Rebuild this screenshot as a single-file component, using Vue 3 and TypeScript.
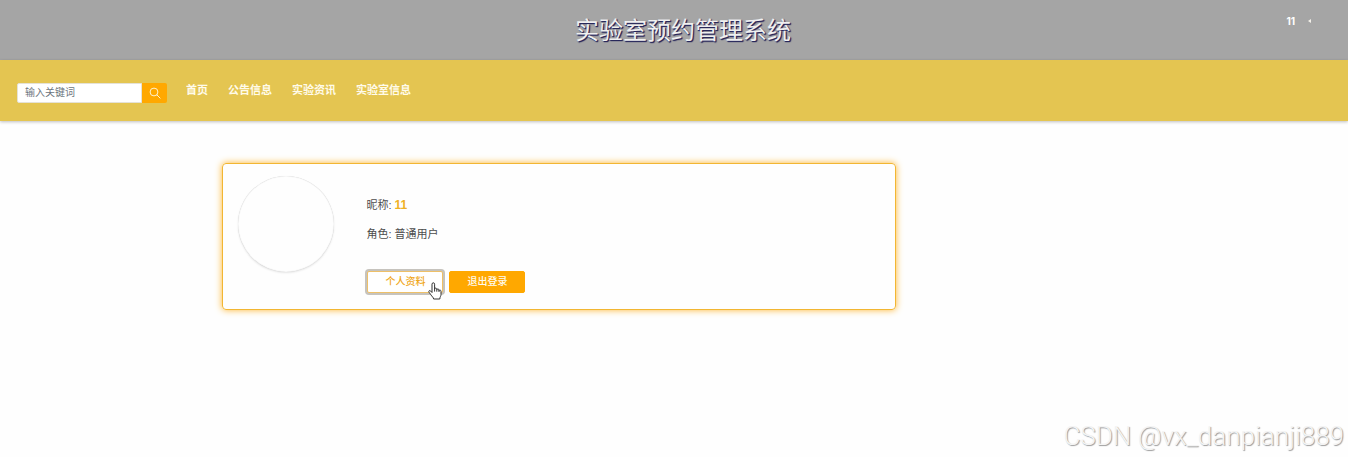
<script setup lang="ts">
import { ref } from 'vue'

interface NavLink {
  label: string
  href: string
}

const keyword = ref<string>('')
const nickname = '11'
const role = '普通用户'
const links: NavLink[] = [
  { label: '首页', href: '#home' },
  { label: '公告信息', href: '#notice' },
  { label: '实验资讯', href: '#news' },
  { label: '实验室信息', href: '#labs' },
]
</script>

<template>
  <div class="page">
    <header class="banner">
      <h1 class="title">实验室预约管理系统</h1>
      <button class="account" type="button">
        <span>{{ nickname }}</span>
        <svg class="caret" viewBox="0 0 4 4" aria-hidden="true"><path d="M3 0v4L0 2z" fill="#f4f1ea" /></svg>
      </button>
    </header>

    <div class="bar">
      <form class="search" role="search" @submit.prevent>
        <input v-model="keyword" class="field" type="text" placeholder="输入关键词" aria-label="输入关键词" />
        <button class="go" type="submit" aria-label="搜索">
          <svg viewBox="0 0 12 12" aria-hidden="true">
            <circle cx="5" cy="5" r="3.9" />
            <path d="M7.8 7.8 11.4 11.4" />
          </svg>
        </button>
      </form>
      <nav class="nav">
        <a v-for="link in links" :key="link.href" :href="link.href">{{ link.label }}</a>
      </nav>
    </div>

    <main class="content">
      <section class="card">
        <div class="avatar"></div>
        <div class="info">
          <p>昵称: <b>{{ nickname }}</b></p>
          <p>角色: {{ role }}</p>
          <div class="actions">
            <button class="btn outline" type="button">
              个人资料
              <svg class="pointer" viewBox="0 0 14 18" aria-hidden="true">
                <path
                  d="M4 10.5V2.2C4 .3 6.6.3 6.6 2.2V7c0-1.3 2.2-1.2 2.2.2v.5c.2-1.2 2.2-1 2.2.3v.6c.4-1 2-.7 2 .6v3.3c0 1.8-1.2 2.4-1.2 4.5H5.6c0-1.6-1.8-2.5-2.7-4.2L1 10.2c-.8-1.4.8-2.2 1.7-1.2z"
                />
                <path d="M6.6 7v2.6M8.8 7.5v2.2M11 8.2v1.8" />
              </svg>
            </button>
            <button class="btn solid" type="button">退出登录</button>
          </div>
        </div>
      </section>
    </main>

    <footer class="mark">CSDN @vx_danpianji889</footer>
  </div>
</template>

<style>
body {
  margin: 0;
  background: #fefefe;
}
</style>

<style scoped>
.page {
  min-height: 100vh;
  display: flex;
  flex-direction: column;
  color: #4c4c4c;
  font-family: "Liberation Sans", "Noto Sans CJK SC", sans-serif;
  font-size: 11px;
}
.page * {
  box-sizing: border-box;
}
.banner {
  display: grid;
  grid-template-columns: 1fr auto 1fr;
  align-items: center;
  height: 60px;
  padding: 2px 26px 0 44px;
  background: #a5a5a5;
}
.title {
  grid-column: 2;
  margin: 0;
  color: #f0f0f0;
  font-size: 24px;
  font-weight: 400;
  line-height: 36px;
  text-shadow: 1px 1px 1px #26265a, 1px 1px 1px #26265a;
}
.account {
  justify-self: end;
  display: flex;
  align-items: center;
  gap: 13px;
  margin: 0 10px 20px 0;
  padding: 0;
  border: 0;
  background: none;
  color: #fff;
  font: bold 10px/12px Inter, "Noto Sans", sans-serif;
}
.caret {
  width: 4px;
  height: 4px;
}
.bar {
  display: flex;
  align-items: flex-start;
  height: 61px;
  padding: 23px 17px 0;
  background: #e4c551;
  box-shadow: 0 1px 3px rgba(0, 0, 0, 0.25);
}
.search {
  display: flex;
  height: 20px;
}
.field {
  width: 125px;
  padding: 0 7px;
  border: 1px solid #e5e2d6;
  border-radius: 2px 0 0 2px;
  outline: 0;
  background: #fff;
  color: #495057;
  font: 10px/18px "Liberation Sans", "Noto Sans CJK SC", sans-serif;
}
.field::placeholder {
  color: #6c757d;
  opacity: 1;
}
.go {
  display: flex;
  align-items: center;
  justify-content: center;
  width: 25px;
  padding: 0;
  border: 0;
  border-radius: 0 2px 2px 0;
  background: #ffa800;
}
.go svg {
  width: 12px;
  height: 12px;
  fill: none;
  stroke: #fff2cf;
  stroke-width: 1;
}
.nav {
  display: flex;
  gap: 20px;
  padding-left: 19px;
}
.nav a {
  color: #fffbea;
  font-weight: 700;
  line-height: 14px;
  text-decoration: none;
}
.content {
  flex: 1;
  padding: 42px 33.5% 16px 16.5%;
}
.card {
  display: flex;
  gap: 32px;
  padding: 12px 15px 16px;
  border: 1px solid #f2b632;
  border-radius: 4px;
  box-shadow: 0 0 7px #ffb52e;
}
.avatar {
  flex: none;
  width: 96px;
  height: 96px;
  border-radius: 50%;
  box-shadow: inset 0 0 1px #bbb, 0 1px 2px rgba(0, 0, 0, 0.1);
}
.info {
  padding-top: 20px;
}
.info p {
  margin: 0 0 11px;
  line-height: 18px;
}
.info b {
  color: #efb126;
  font-size: 12px;
}
.actions {
  display: flex;
  gap: 6px;
  padding: 17px 0 0 1px;
}
.btn {
  position: relative;
  width: 76px;
  height: 22px;
  padding: 0;
  border: 1px solid #ffa800;
  border-radius: 2px;
  font: 500 10px/20px "Liberation Sans", "Noto Sans CJK SC", sans-serif;
}
.outline {
  border-color: #eec068;
  background: #fff;
  color: #f0a81c;
  box-shadow: 0 0 0 2px #c6c3bd;
}
.solid {
  background: #ffa800;
  color: #fffbee;
}
.pointer {
  position: absolute;
  right: 0;
  bottom: -8px;
  width: 14px;
  height: 18px;
  fill: #fff;
  stroke: #333;
  stroke-width: 1;
}
.mark {
  padding: 0 4px 6px;
  color: #f4f4f4;
  font-family: Roboto, "Liberation Sans", sans-serif;
  font-size: 26px;
  font-weight: 300;
  line-height: 30px;
  text-align: right;
  text-shadow: 1px 1px 1px #999;
}
</style>
